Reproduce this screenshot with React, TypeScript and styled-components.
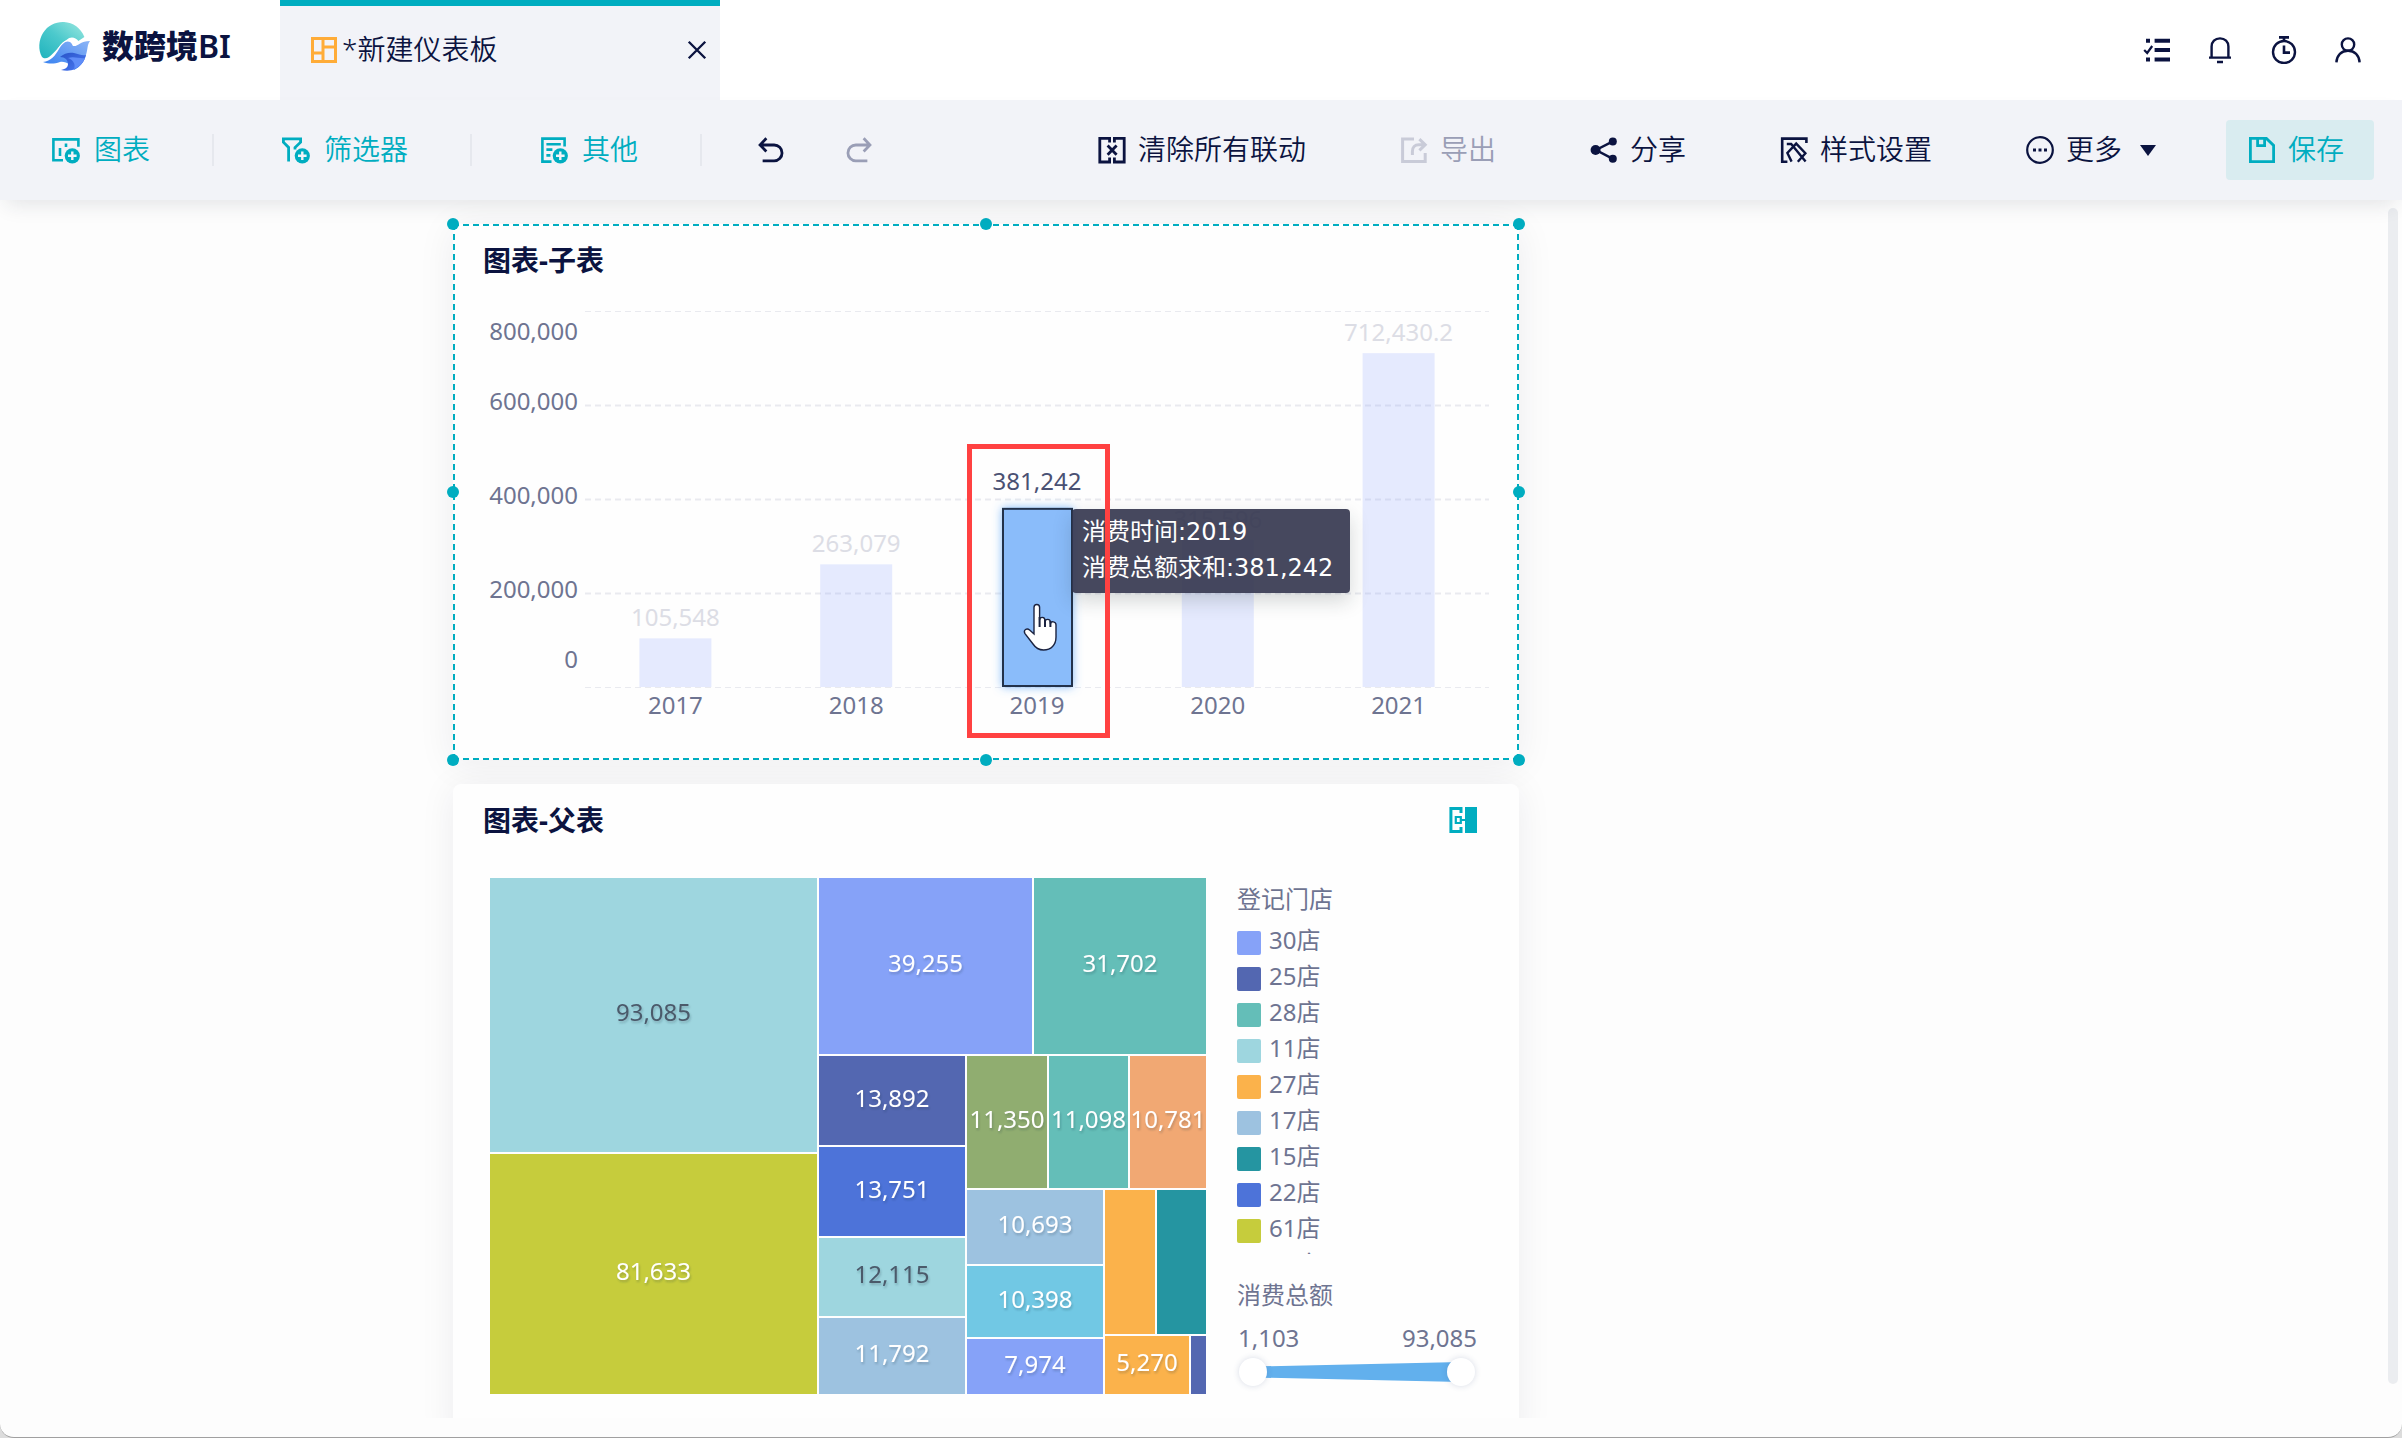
import React, { useState } from "react";
import styled, { createGlobalStyle } from "styled-components";

const color = {
  teal: "#00adc0",
  navy: "#0b1340",
  text: "#6e7491",
  bar: "#f2f3f8",
  disabled: "#9a9eb6",
  disabledIcon: "#c9cbd8",
};

const uiFont = `"Noto Sans", "Noto Sans CJK SC", sans-serif`;

const GlobalStyle = createGlobalStyle`
  *, *::before, *::after { box-sizing: border-box; }
  body { margin: 0; background: #dcdcdc; font-family: ${uiFont}; color: ${color.navy}; }
  button { font: inherit; color: inherit; border: 0; background: none; padding: 0; cursor: pointer; }
  button:disabled { cursor: default; }
`;

/* ---------- shell ---------- */

const Window = styled.div`
  display: flex;
  flex-direction: column;
  height: 100vh;
  overflow: hidden;
  background: #fdfdfd;
  border-bottom: 1px solid #a0a0a0;
  border-radius: 0 0 14px 14px;
`;

const Header = styled.header`
  display: flex;
  flex: none;
  height: 100px;
  background: #fff;
`;

const Brand = styled.a`
  display: flex;
  align-items: center;
  gap: 10px;
  width: 280px;
  padding: 0 0 8px 38px;
  color: ${color.navy};
  text-decoration: none;
`;

const BrandName = styled.span`
  font-size: 32px;
  line-height: 40px;
  font-weight: 900;
  white-space: nowrap;
`;

const BrandSuffix = styled.span`
  font-weight: 600;
`;

const Tab = styled.div`
  display: flex;
  align-items: center;
  width: 440px;
  padding: 0 12px 6px 30px;
  border-top: 6px solid ${color.teal};
  background: ${color.bar};
`;

const TabTitle = styled.span`
  flex: 1;
  margin-left: 4px;
  padding-bottom: 2px;
  font-size: 28px;
  font-weight: 350;
  line-height: 40px;
  white-space: nowrap;
`;

const IconButton = styled.button`
  display: flex;
  align-items: center;
  justify-content: center;
`;

const HeaderTools = styled.nav`
  display: flex;
  align-items: center;
  gap: 36px;
  margin-left: auto;
  padding-right: 40px;
`;

const Toolbar = styled.div`
  position: relative;
  z-index: 2;
  display: flex;
  flex: none;
  align-items: center;
  height: 100px;
  padding: 0 28px 0 52px;
  background: ${color.bar};
  box-shadow: 0 10px 20px -6px rgba(30, 40, 60, 0.12);
`;

const ToolButton = styled.button<{ $tone?: string; $gap?: number }>`
  display: flex;
  flex: none;
  align-items: center;
  gap: ${(p) => p.$gap ?? 12}px;
  font-size: 28px;
  font-weight: 350;
  line-height: 40px;
  white-space: nowrap;
  color: ${(p) => p.$tone ?? color.navy};
`;

const ToolLabel = styled.span`
  padding-bottom: 2px;
`;

const Divider = styled.span`
  flex: none;
  width: 2px;
  height: 32px;
  margin: 0 68px 0 62px;
  background: #e6e8ee;
`;

const History = styled.div`
  display: flex;
  gap: 62px;
  margin-left: -12px;
`;

const Actions = styled.div`
  display: flex;
  align-items: center;
  gap: 94px;
  margin-left: auto;
`;

const Caret = styled.span`
  margin-left: 6px;
  border: 8px solid transparent;
  border-top: 11px solid ${color.navy};
  border-bottom: 0;
`;

const SaveButton = styled(ToolButton)`
  height: 60px;
  margin-left: 70px;
  padding: 0 30px 0 22px;
  border-radius: 4px;
  background: #d9ecf0;
`;

/* ---------- canvas ---------- */

const Workspace = styled.main`
  position: relative;
  flex: 1;
  min-height: 0;
  margin-bottom: 19px;
  padding: 24px 24px 0;
  overflow: hidden;
`;

const ScrollThumb = styled.span`
  position: absolute;
  top: 8px;
  right: 4px;
  bottom: 34px;
  width: 10px;
  border-radius: 5px;
  background: #ebedf0;
`;

const Board = styled.div`
  display: grid;
  grid-template-columns: minmax(0, 1066px) 1fr;
  gap: 24px 0;
  max-width: 1496px;
  margin: 0 auto;
`;

const Card = styled.section<{ $selected?: boolean }>`
  position: relative;
  grid-column: 1;
  border: 2px ${(p) => (p.$selected ? `dashed ${color.teal}` : "solid #fefefe")};
  border-radius: ${(p) => (p.$selected ? 0 : 8)}px;
  background: #fefefe;
  box-shadow: 0 4px 36px rgba(30, 30, 50, 0.07);
`;

const CardHead = styled.div`
  display: flex;
  align-items: center;
  justify-content: space-between;
  height: 70px;
  padding: 0 40px 2px 28px;
`;

const CardTitle = styled.h2`
  margin: 0;
  font-size: 28px;
  line-height: 40px;
  font-weight: 700;
`;

const Handle = styled.i<{ $x: number; $y: number }>`
  position: absolute;
  left: calc(${(p) => p.$x}% - 6px);
  top: calc(${(p) => p.$y}% - 6px);
  width: 12px;
  height: 12px;
  border-radius: 50%;
  background: ${color.teal};
`;

const Handles = styled.div`
  position: absolute;
  inset: -2px;
  pointer-events: none;
`;

const Chart = styled.svg`
  display: block;
  width: 100%;
  overflow: visible;
  font-family: ${uiFont};
  font-size: 24px;
`;

const ChartStage = styled.div`
  position: relative;
`;

const Tooltip = styled.div`
  position: absolute;
  left: 617px;
  top: 213px;
  min-width: 278px;
  padding: 5px 10px 7px;
  border-radius: 4px;
  background: rgba(50, 52, 76, 0.9);
  box-shadow: 0 8px 20px rgba(20, 40, 40, 0.18);
  color: #fff;
  font-family: "DejaVu Sans", "Noto Sans CJK SC", sans-serif;
  font-size: 24px;
  line-height: 36px;
  white-space: nowrap;
`;

const Marker = styled.div`
  position: absolute;
  left: 512px;
  top: 148px;
  width: 143px;
  height: 294px;
  border: 5px solid #ff4141;
`;

const Pointer = styled.svg`
  position: absolute;
  left: 568px;
  top: 307px;
  width: 36px;
  height: 48px;
`;

/* ---------- treemap card ---------- */

const MapBody = styled.div`
  display: grid;
  grid-template-columns: minmax(0, 716px) 240px;
  gap: 31px;
  padding: 22px 0 48px 35px;
`;

const Side = styled.div`
  color: ${color.text};
  font-size: 24px;
  line-height: 36px;
`;

const SideTitle = styled.h3`
  margin: 0;
  padding-top: 3px;
  font: inherit;
`;

const Legend = styled.ul`
  height: 332px;
  margin: 5px 0 20px;
  padding: 0;
  overflow: hidden;
  list-style: none;
`;

const LegendItem = styled.li`
  display: flex;
  gap: 8px;
  height: 36px;
`;

const Swatch = styled.span<{ $fill: string }>`
  width: 24px;
  height: 24px;
  margin-top: 9px;
  border-radius: 2px;
  background: ${(p) => p.$fill};
`;

const RangeValues = styled.div`
  display: flex;
  justify-content: space-between;
  margin-top: 7px;
  padding-left: 1px;
`;

const RangeBox = styled.div`
  display: grid;
  align-items: center;
  height: 28px;
  margin: 2px 2px 0;
  > * { grid-area: 1 / 1; }
`;

const Wedge = styled.svg`
  width: 100%;
  height: 20px;
`;

const RangeInput = styled.input`
  width: 100%;
  height: 28px;
  margin: 0;
  appearance: none;
  background: transparent;
  pointer-events: none;
  &::-webkit-slider-runnable-track {
    height: 28px;
    background: transparent;
  }
  &::-webkit-slider-thumb {
    appearance: none;
    width: 28px;
    height: 28px;
    border-radius: 50%;
    background: #fff;
    box-shadow: 0 0 6px rgba(60, 80, 130, 0.2);
    pointer-events: auto;
  }
`;

/* ---------- icons ---------- */

type IconProps = { children: React.ReactNode; size?: number; stroke?: number; tone?: string };

const Icon = ({ children, size = 28, stroke = 2.6, tone = "currentColor" }: IconProps) => (
  <svg width={size} height={size} viewBox="0 0 28 28" fill="none" stroke={tone} strokeWidth={stroke} aria-hidden="true">
    {children}
  </svg>
);

const PlusBadge = () => (
  <>
    <circle cx="20.3" cy="19.8" r="7.6" fill="currentColor" stroke="none" />
    <path d="M16 19.8h8.6M20.3 15.5v8.6" stroke={color.bar} strokeWidth="2.4" />
  </>
);

const ChartAdd = () => (
  <Icon>
    <path d="M11 24.2H1.4V3.4h25v7.4M8 12v8M14 7.6v3.4" />
    <PlusBadge />
  </Icon>
);
const FilterAdd = () => (
  <Icon stroke={2.8}>
    <path d="M13 13.6v-2l5.6-5.4V2.8H1.4v3.4l5.2 5.2v14" />
    <PlusBadge />
  </Icon>
);
const OtherAdd = () => (
  <Icon>
    <path d="M11.5 25.6H2.4V2.6h22.2v8M6.4 8.2h14.4M6.4 13.6h6M6.4 19.4h4" />
    <PlusBadge />
  </Icon>
);
const Undo = () => (
  <Icon size={26} stroke={3}>
    <path d="M9 1.4 2.2 8.6 9 15.6M3 8.6h14.4a8.5 8.5 0 0 1 0 17H5" />
  </Icon>
);
const Redo = () => (
  <Icon size={26} stroke={3}>
    <path d="m19 1.4 6.8 7.2-6.8 7M25 8.6H10.6a8.5 8.5 0 0 0 0 17H23" />
  </Icon>
);
const Unlink = () => (
  <Icon stroke={2.8}>
    <path d="M11.6 6.6V2.4H1.8v23.6h9.8v-4.4M16.4 6.6V2.4h9.8v23.6h-9.8v-4.4" />
    <path d="m9.6 9.6 9 9.2M18.600 9.600l-9 9.200" />
  </Icon>
);
const Export = () => (
  <Icon tone={color.disabledIcon} stroke={3}>
    <path d="M14 3H2.6v22.4h22.6V17M12.4 19v-3.6c0-4 2.4-6.6 6.4-6.6H25M19.4 3.2l5.8 5.6-5.8 5.6" />
  </Icon>
);
const Share = () => (
  <Icon stroke={2.4}>
    <path d="M22.4 5.6 6 14l16.4 8.6" />
    <g fill="currentColor" stroke="none">
      <circle cx="22.8" cy="5.4" r="4" />
      <circle cx="5.6" cy="14" r="5" />
      <circle cx="22.8" cy="22.8" r="4" />
    </g>
  </Icon>
);
const StyleSet = () => (
  <Icon>
    <path d="M26.4 7V2.6H2.2v23.2h5.2" />
    <path d="M6.8 8h4.400l14.400 17.600M11.600 25.600 7.400 17l8.800-9.400 9.200 9.600-7.600 8.600" strokeWidth="2.4" />
  </Icon>
);
const More = () => (
  <Icon stroke={2.2}>
    <circle cx="14" cy="14" r="12.8" />
    <path d="M7 14h3M12.5 14h3M18 14h3" strokeWidth="3" />
  </Icon>
);
const Save = () => (
  <Icon stroke={2.8}>
    <path d="M2.400 2.400h16l7.200 7v16.200H2.400zM9.600 3v6.600h7V3" />
  </Icon>
);
const Tasks = () => (
  <Icon>
    <path d="M12.600 4.800H28M12.600 14H28M12.600 23.400H28" strokeWidth="4" />
    <path d="M4 4.800h4M4 23.400h4" strokeWidth="4" />
    <path d="m2.200 14 3 3 5-7" strokeWidth="2.2" />
  </Icon>
);
const Bell = () => (
  <Icon stroke={2.4}>
    <path d="M3 21.600h22M5.600 21.400V10.600C5.600 5.600 9 2.400 14 2.400s8.400 3.200 8.400 8.200v10.800M11 26h6" />
  </Icon>
);
const Timer = () => (
  <Icon stroke={2.4}>
    <circle cx="14" cy="16" r="11" />
    <path d="M9 1.400h10M14 2v3M14 9.600v7h6" strokeWidth="2.6" />
  </Icon>
);
const User = () => (
  <Icon stroke={2.4}>
    <circle cx="14" cy="8.600" r="6.200" />
    <path d="M2.400 26.400c.4-7.200 5-11.600 11.600-11.600s11.200 4.400 11.600 11.600" />
  </Icon>
);
const Close = () => (
  <Icon size={22} stroke={3}>
    <path d="m3.500 3.500 21 21M24.500 3.500l-21 21" />
  </Icon>
);
const BoardIcon = () => (
  <svg width="28" height="28" viewBox="0 0 28 28" fill="none" stroke="#ffac38" strokeWidth="3" aria-hidden="true">
    <path d="M2.500 2.500h23v23h-23zM13 2.500v23M2.500 17H13M13 11h12.500" />
  </svg>
);
const Linked = () => (
  <svg width="28" height="28" viewBox="0 0 28 28" fill="none" stroke={color.teal} strokeWidth="3" aria-hidden="true">
    <path d="M12 7V2.500H1.900v23H12V21" />
    <path d="M6.800 11h5v6h-5zM12 14h5" strokeWidth="2.2" />
    <path d="M16 1h12v26H16z" fill={color.teal} stroke="none" />
  </svg>
);

const Logo = () => (
  <svg width="54" height="54" viewBox="0 0 54 54" aria-hidden="true">
    <defs>
      <linearGradient id="sky" x1="1" y1="0" x2="0" y2="1">
        <stop offset="0" stopColor="#9be8e0" />
        <stop offset="0.5" stopColor="#4cc9cc" />
        <stop offset="1" stopColor="#1fb3bd" />
      </linearGradient>
      <linearGradient id="wave" x1="1" y1="0" x2="0" y2="1">
        <stop offset="0" stopColor="#8db4f6" />
        <stop offset="1" stopColor="#2f7df0" />
      </linearGradient>
      <linearGradient id="deep" x1="0" y1="0" x2="1" y2="1">
        <stop offset="0" stopColor="#2853c8" />
        <stop offset="1" stopColor="#4d7cf5" />
      </linearGradient>
    </defs>
    <path d="M4 38C0 31 .6 21 5 14 10 6 18 2.600 26 3c9 .4 17 6 20.400 15l-6 4c-3-4-8-5-12-1C21 26 17 34 11 38c-2.400 1.600-5 2-7 0z" fill="url(#sky)" />
    <path
      d="M5 43c8-1 12-6 16-13 3-5 7-9 11-7 2 1 2 3 3 4 5 1 7-5 17-5-3 4-2 8-4 14-2 7-6 12-12 15-2-5-8-9-14-8-6 2-11 2-17 0z"
      fill="url(#wave)"
      stroke="#fff"
      strokeWidth="2.400"
      strokeLinejoin="round"
      paintOrder="stroke"
    />
    <path d="M22 38c4-4 10-5 14-4 5 1 8 3 12 2-2 7-5 11-11 14-4 2-9 2-14 1 5-1 7-3 7-6 0-4-3-7-8-7z" fill="url(#deep)" />
    <path d="M30 39c5 2 8 6 6 11 5-2 9-6 11-11-5 1-11-2-17 0z" fill="#5f8df8" />
  </svg>
);

/* ---------- bar chart ---------- */

const spend = [
  { year: "2017", value: 105548, label: "105,548" },
  { year: "2018", value: 263079, label: "263,079" },
  { year: "2019", value: 381242, label: "381,242", active: true },
  { year: "2020", value: 315596, label: "315,596" },
  { year: "2021", value: 712430.2, label: "712,430.2" },
];

const yTicks = [
  { label: "800,000", y: 36 },
  { label: "600,000", y: 106 },
  { label: "400,000", y: 200 },
  { label: "200,000", y: 294 },
  { label: "0", y: 364 },
];

const plot = { left: 130, right: 1034, top: 15, height: 376 };
const band = (plot.right - plot.left) / spend.length;
const base = plot.top + plot.height;

const BarChart = () => (
  <Chart viewBox="0 0 1062 462" role="img" aria-label="图表-子表">
    <defs>
      <filter id="glow" x="-30%" y="-10%" width="160%" height="120%">
        <feDropShadow dx="0" dy="0" stdDeviation="5" floodColor="#4c9cf8" floodOpacity="0.7" />
      </filter>
    </defs>
    {[0, 1, 2, 3, 4].map((i) => (
      <line
        key={i}
        x1={plot.left}
        x2={plot.right}
        y1={plot.top + i * 94 + 0.5}
        y2={plot.top + i * 94 + 0.5}
        stroke="#e9eaef"
        strokeWidth={i % 4 ? 2 : 1}
        strokeDasharray="6 4"
      />
    ))}
    {yTicks.map((t) => (
      <text key={t.label} x={123} y={t.y + 8} textAnchor="end" fill={color.text}>
        {t.label}
      </text>
    ))}
    {spend.map((d, i) => {
      const cx = plot.left + band * (i + 0.5);
      const h = (d.value / 800000) * plot.height;
      const top = base - h;
      return (
        <g key={d.year}>
          {d.active ? (
            <rect x={cx - 34} y={top + 1} width={69} height={h - 2} fill="#8abcfa" stroke="#20304c" strokeWidth="2" filter="url(#glow)" />
          ) : (
            <rect x={cx - 36} y={top + 1} width={72} height={h - 1} fill="#8a9fff" fillOpacity="0.21" />
          )}
          <text x={cx} y={top - (d.active ? 18 : 11)} textAnchor="middle" fill={d.active ? "#4a5173" : "#dcdde5"}>
            {d.label}
          </text>
          <text x={cx} y={base + 27} textAnchor="middle" fill={color.text}>
            {d.year}
          </text>
        </g>
      );
    })}
  </Chart>
);

/* ---------- treemap ---------- */

type Cell = { x: number; y: number; w: number; h: number; fill: string; label?: string; ink?: string };

const cells: Cell[] = [
  { x: 0, y: 0, w: 327, h: 274, fill: "#9ed6df", label: "93,085", ink: "#4b5a6b" },
  { x: 0, y: 276, w: 327, h: 240, fill: "#c6cc3c", label: "81,633" },
  { x: 329, y: 0, w: 213, h: 176, fill: "#86a2f8", label: "39,255" },
  { x: 544, y: 0, w: 172, h: 176, fill: "#64beb8", label: "31,702" },
  { x: 329, y: 178, w: 146, h: 89, fill: "#5367b1", label: "13,892" },
  { x: 329, y: 269, w: 146, h: 89, fill: "#4d73d9", label: "13,751" },
  { x: 329, y: 360, w: 146, h: 78, fill: "#9ed6df", label: "12,115", ink: "#4b5a6b" },
  { x: 329, y: 440, w: 146, h: 76, fill: "#9dc2e0", label: "11,792" },
  { x: 477, y: 178, w: 80, h: 132, fill: "#90ad70", label: "11,350" },
  { x: 559, y: 178, w: 79, h: 132, fill: "#64beb8", label: "11,098" },
  { x: 640, y: 178, w: 76, h: 132, fill: "#f1a873", label: "10,781" },
  { x: 477, y: 312, w: 136, h: 74, fill: "#9dc2e0", label: "10,693" },
  { x: 477, y: 388, w: 136, h: 71, fill: "#71c8e4", label: "10,398" },
  { x: 477, y: 461, w: 136, h: 55, fill: "#86a2f8", label: "7,974" },
  { x: 615, y: 312, w: 50, h: 144, fill: "#fbb24b" },
  { x: 667, y: 312, w: 49, h: 144, fill: "#2595a1" },
  { x: 615, y: 458, w: 84, h: 58, fill: "#fbb24b", label: "5,270" },
  { x: 701, y: 458, w: 15, h: 58, fill: "#5367b1" },
];

const TreeMap = () => (
  <Chart viewBox="0 0 716 516" role="img" aria-label="图表-父表">
    <defs>
      <filter id="ink" x="-10%" y="-10%" width="120%" height="140%">
        <feDropShadow dx="1" dy="2" stdDeviation="1" floodColor="#203040" floodOpacity="0.25" />
      </filter>
    </defs>
    {cells.map((c) => (
      <g key={`${c.x}-${c.y}`}>
        <rect x={c.x} y={c.y} width={c.w} height={c.h} fill={c.fill} />
        {c.label && (
          <text x={c.x + c.w / 2} y={c.y + c.h / 2 + 6} textAnchor="middle" fill={c.ink ?? "#fff"} filter="url(#ink)">
            {c.label}
          </text>
        )}
      </g>
    ))}
  </Chart>
);

const stores = [
  ["30店", "#86a2f8"],
  ["25店", "#5367b1"],
  ["28店", "#64beb8"],
  ["11店", "#9ed6df"],
  ["27店", "#fbb24b"],
  ["17店", "#9dc2e0"],
  ["15店", "#2595a1"],
  ["22店", "#4d73d9"],
  ["61店", "#c6cc3c"],
  ["14店", "#71c8e4"],
];

const min = 1103;
const max = 93085;

const SpendRange = () => {
  const [low, setLow] = useState(min);
  const [high, setHigh] = useState(max);
  return (
    <>
      <RangeValues>
        <output>{low.toLocaleString("en-US")}</output>
        <output>{high.toLocaleString("en-US")}</output>
      </RangeValues>
      <RangeBox>
        <Wedge viewBox="0 0 236 20" preserveAspectRatio="none" aria-hidden="true">
          <path d="M14 4.500 222 0v20L14 15.500z" fill="#62b0ed" />
        </Wedge>
        <RangeInput type="range" aria-label="消费总额最小值" min={min} max={max} value={low} onChange={(e) => setLow(Math.min(+e.target.value, high))} />
        <RangeInput type="range" aria-label="消费总额最大值" min={min} max={max} value={high} onChange={(e) => setHigh(Math.max(+e.target.value, low))} />
      </RangeBox>
    </>
  );
};

const corners = [
  [0, 0], [50, 0], [100, 0],
  [0, 50], [100, 50],
  [0, 100], [50, 100], [100, 100],
];

export default function App() {
  return (
    <>
      <GlobalStyle />
      <Window>
        <Header>
          <Brand href="#">
            <Logo />
            <BrandName>
              数跨境<BrandSuffix>BI</BrandSuffix>
            </BrandName>
          </Brand>
          <Tab>
            <BoardIcon />
            <TabTitle>*新建仪表板</TabTitle>
            <IconButton aria-label="关闭"><Close /></IconButton>
          </Tab>
          <HeaderTools>
            <IconButton aria-label="任务"><Tasks /></IconButton>
            <IconButton aria-label="通知"><Bell /></IconButton>
            <IconButton aria-label="计时"><Timer /></IconButton>
            <IconButton aria-label="用户"><User /></IconButton>
          </HeaderTools>
        </Header>

        <Toolbar>
          <ToolButton $tone={color.teal} $gap={14}><ChartAdd /><ToolLabel>图表</ToolLabel></ToolButton>
          <Divider />
          <ToolButton $tone={color.teal} $gap={14}><FilterAdd /><ToolLabel>筛选器</ToolLabel></ToolButton>
          <Divider />
          <ToolButton $tone={color.teal} $gap={14}><OtherAdd /><ToolLabel>其他</ToolLabel></ToolButton>
          <Divider />
          <History>
            <ToolButton aria-label="撤销"><Undo /></ToolButton>
            <ToolButton $tone={color.disabled} aria-label="重做" disabled><Redo /></ToolButton>
          </History>
          <Actions>
            <ToolButton><Unlink /><ToolLabel>清除所有联动</ToolLabel></ToolButton>
            <ToolButton $tone={color.disabled} disabled><Export /><ToolLabel>导出</ToolLabel></ToolButton>
            <ToolButton><Share /><ToolLabel>分享</ToolLabel></ToolButton>
            <ToolButton><StyleSet /><ToolLabel>样式设置</ToolLabel></ToolButton>
            <ToolButton><More /><ToolLabel>更多</ToolLabel><Caret /></ToolButton>
          </Actions>
          <SaveButton $tone={color.teal}><Save /><ToolLabel>保存</ToolLabel></SaveButton>
        </Toolbar>

        <Workspace>
          <Board>
            <Card $selected>
              <CardHead>
                <CardTitle>图表-子表</CardTitle>
              </CardHead>
              <ChartStage>
                <BarChart />
                <Tooltip>
                  <div>消费时间:2019</div>
                  <div>消费总额求和:381,242</div>
                </Tooltip>
                <Pointer viewBox="0 0 36 48" aria-hidden="true">
                  <path
                    d="M11 31V4.500c0-4 5.600-4 5.600 0V17c0-3.600 5.400-3.400 5.400.400v1.400c0-3.400 5.400-3.200 5.400.4v1.600c.4-3 5.600-2.600 5.600 1V34c0 8-5 13-12.400 13-5 0-8-2-10.600-6L2 30.600c-2-3.600 1.800-6 4.600-3.600z"
                    fill="#fff"
                    stroke="#1b2340"
                    strokeWidth="1.400"
                  />
                  <path d="M16.600 14v10M22 17v7M27.400 18v6" stroke="#1b2340" strokeWidth="2" />
                </Pointer>
                <Marker />
              </ChartStage>
              <Handles>
                {corners.map(([x, y]) => (
                  <Handle key={`${x}-${y}`} $x={x} $y={y} />
                ))}
              </Handles>
            </Card>

            <Card>
              <CardHead>
                <CardTitle>图表-父表</CardTitle>
                <IconButton aria-label="联动"><Linked /></IconButton>
              </CardHead>
              <MapBody>
                <TreeMap />
                <Side>
                  <SideTitle>登记门店</SideTitle>
                  <Legend>
                    {stores.map(([name, fill]) => (
                      <LegendItem key={name}>
                        <Swatch $fill={fill} />
                        {name}
                      </LegendItem>
                    ))}
                  </Legend>
                  <SideTitle>消费总额</SideTitle>
                  <SpendRange />
                </Side>
              </MapBody>
            </Card>
          </Board>
          <ScrollThumb />
        </Workspace>
      </Window>
    </>
  );
}
